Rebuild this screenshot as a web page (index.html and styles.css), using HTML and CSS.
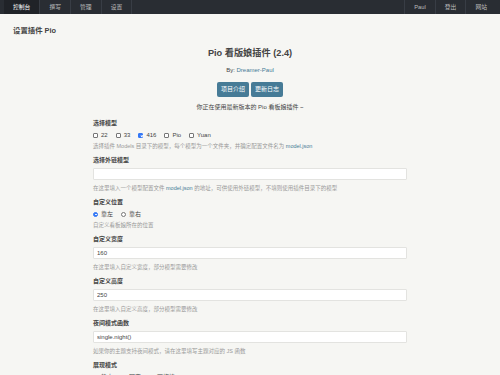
FILE: index.html
```html
<!DOCTYPE html>
<html lang="zh-CN">

<head>
  <meta charset="UTF-8" />
  <title>设置插件 Pio</title>
  <meta name="viewport" content="width=device-width, initial-scale=1.0" />
  <link rel="stylesheet" href="styles.css">
</head>

<body>

  <!-- Top Nav -->
  <div class="head-nav">
    <nav class="nav-list">
      <a href="#" class="focus">控制台</a>
      <a href="#">撰写</a>
      <a href="#">管理</a>
      <a href="#">设置</a>
    </nav>
    <div class="operate">
      <a href="#">Paul</a>
      <a href="#">登出</a>
      <a href="#">网站</a>
    </div>
  </div>

  <h2 class="page-title">设置插件 Pio</h2>

  <div class="main">
    <div class="intro">
      <h1 class="intro-title">Pio 看版娘插件 (2.4)</h1>
      <p class="intro-by">By: <a href="#">Dreamer-Paul</a></p>
      <div class="intro-btns">
        <a href="#" class="btn">项目介绍</a>
        <a href="#" class="btn">更新日志</a>
      </div>
      <p class="intro-notice">你正在使用最新版本的 Pio 看板娘插件 ~</p>
    </div>

    <form class="config">
      <div class="field">
        <label class="field-label">选择模型</label>
        <div class="choices">
          <label class="choice"><input type="checkbox">22</label>
          <label class="choice"><input type="checkbox">33</label>
          <label class="choice"><input type="checkbox" checked>416</label>
          <label class="choice"><input type="checkbox">Pio</label>
          <label class="choice"><input type="checkbox">Yuan</label>
        </div>
        <p class="desc">选择插件 Models 目录下的模型，每个模型为一个文件夹，并确定配置文件名为 <a href="#">model.json</a></p>
      </div>

      <div class="field">
        <label class="field-label">选择外链模型</label>
        <input class="text" type="text" value="">
        <p class="desc">在这里填入一个模型配置文件 <a href="#">model.json</a> 的地址，可供使用外链模型，不填则使用插件目录下的模型</p>
      </div>

      <div class="field">
        <label class="field-label">自定义位置</label>
        <div class="choices">
          <label class="choice"><input type="radio" name="position" checked>靠左</label>
          <label class="choice"><input type="radio" name="position">靠右</label>
        </div>
        <p class="desc">自定义看板娘所在的位置</p>
      </div>

      <div class="field">
        <label class="field-label">自定义宽度</label>
        <input class="text" type="text" value="160">
        <p class="desc">在这里填入自定义宽度，部分模型需要修改</p>
      </div>

      <div class="field">
        <label class="field-label">自定义高度</label>
        <input class="text" type="text" value="250">
        <p class="desc">在这里填入自定义高度，部分模型需要修改</p>
      </div>

      <div class="field">
        <label class="field-label">夜间模式函数</label>
        <input class="text" type="text" value="single.night()">
        <p class="desc">如果你的主题支持夜间模式，请在这里填写主题对应的 JS 函数</p>
      </div>

      <div class="field">
        <label class="field-label">展现模式</label>
        <div class="choices">
          <label class="choice"><input type="radio" name="mode">静态</label>
          <label class="choice"><input type="radio" name="mode" checked>固定</label>
          <label class="choice"><input type="radio" name="mode">可拖拽</label>
        </div>
        <p class="desc">选择看板娘的展现模式</p>
      </div>
    </form>
  </div>

</body>

</html>
```

FILE: styles.css
```css
:root {
  --bg: #f6f6f3;
  --text: #444;
  --muted: #999;
  --primary: #467b96;
  --nav: #292d33;
  --nav-focus: #202328;
  --nav-line: #383d45;
}

body {
  margin: 0;
  font-family: 'Liberation Sans', 'Noto Sans CJK SC', sans-serif;
  background-color: var(--bg);
  color: var(--text);
  font-size: 6px;
}

a {
  color: var(--primary);
  text-decoration: none;
}

/* Top nav */
.head-nav {
  display: flex;
  justify-content: space-between;
  height: 14px;
  padding: 0 4px;
  background-color: var(--nav);
}

.nav-list,
.operate {
  display: flex;
}

.head-nav a {
  display: block;
  padding: 0 9px;
  line-height: 14px;
  color: #bbb;
  font-size: 5.8px;
}

.nav-list a {
  border-right: 1px solid var(--nav-line);
}

.operate a {
  border-left: 1px solid var(--nav-line);
}

.head-nav a.focus {
  background-color: var(--nav-focus);
  color: #fff;
}

.page-title {
  margin: 12px 0 0;
  padding-left: 13px;
  font-size: 7.4px;
  line-height: 10px;
}

/* Plugin intro */
.main {
  width: 314px;
  margin: 0 auto;
}

.intro {
  text-align: center;
  padding-top: 11px;
}

.intro-title {
  margin: 0;
  font-size: 9.2px;
  line-height: 12px;
}

.intro-by {
  margin: 7px 0 0;
  line-height: 8px;
}

.intro-btns {
  display: flex;
  justify-content: center;
  gap: 2px;
  margin-top: 8px;
}

.btn {
  display: block;
  height: 15px;
  line-height: 15px;
  padding: 0 4px;
  border-radius: 2px;
  background-color: var(--primary);
  color: #fff;
}

.intro-notice {
  margin: 6px 0 0;
  line-height: 8px;
}

/* Config form */
.config {
  margin-top: 8px;
}

.field {
  margin-bottom: 6px;
}

.field-label {
  display: block;
  margin-bottom: 4px;
  font-weight: bold;
  line-height: 8px;
}

.text {
  display: block;
  box-sizing: border-box;
  width: 100%;
  height: 12px;
  margin: 0;
  padding: 0 3px;
  border: 1px solid #e3e3e0;
  border-radius: 1px;
  background-color: #fff;
  color: var(--text);
  font-family: inherit;
  font-size: 6px;
}

.choices {
  display: flex;
  gap: 8px;
  height: 8px;
}

.choice {
  display: flex;
  align-items: center;
  line-height: 8px;
}

.choice input {
  appearance: none;
  box-sizing: border-box;
  width: 5px;
  height: 5px;
  margin: 0 3px 0 0;
  border: 0.6px solid #777;
  border-radius: 1px;
  background-color: #fff;
  position: relative;
}

.choice input[type="radio"] {
  border-radius: 50%;
}

.choice input[type="checkbox"]:checked {
  background-color: #3478f6;
  border-color: #3478f6;
}

.choice input[type="checkbox"]:checked::after {
  content: "";
  position: absolute;
  left: 1.3px;
  top: 0.2px;
  width: 1.2px;
  height: 2.4px;
  border: solid #fff;
  border-width: 0 0.7px 0.7px 0;
  transform: rotate(45deg);
}

.choice input[type="radio"]:checked {
  background-color: #3478f6;
  border-color: #3478f6;
}

.choice input[type="radio"]:checked::after {
  content: "";
  position: absolute;
  left: 1.2px;
  top: 1.2px;
  width: 1.4px;
  height: 1.4px;
  border-radius: 50%;
  background-color: #fff;
}

.desc {
  margin: 3px 0 0;
  color: var(--muted);
  font-size: 5.5px;
  line-height: 8px;
}

.text + .desc {
  margin-top: 4px;
}
```
